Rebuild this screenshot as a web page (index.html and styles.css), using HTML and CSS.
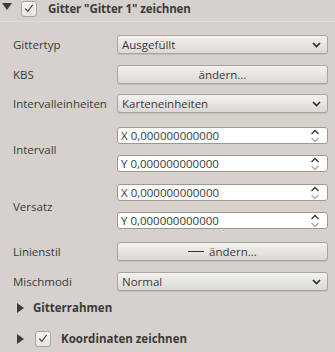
FILE: index.html
```html
<!DOCTYPE html>
<html lang="de">
<head>
<meta charset="utf-8">
<link rel="stylesheet" href="styles.css">
</head>
<body>
<div class="panel">
  <div class="header">
    <svg class="tri" width="10" height="8" viewBox="0 0 10 8"><path d="M0 0 L10 0 L5 7 Z" fill="#3c3c3c"/></svg>
    <span class="check"><svg width="15" height="15" viewBox="0 0 15 15"><path d="M3.5 7.5 L6.3 10.5 L11.5 3.5" fill="none" stroke="#4a4a4a" stroke-width="1.3"/></svg></span>
    <span class="title">Gitter "Gitter 1" zeichnen</span>
  </div>
  <div class="form">
    <div class="row r1">
      <span class="label">Gittertyp</span>
      <div class="combo"><span>Ausgefüllt</span><svg class="chev" width="9" height="6" viewBox="0 0 9 6"><path d="M1 1 L4.5 4.5 L8 1" fill="none" stroke="#2e2e2e" stroke-width="1.7"/></svg></div>
    </div>
    <div class="row r2">
      <span class="label">KBS</span>
      <div class="button">ändern...</div>
    </div>
    <div class="row r3">
      <span class="label">Intervalleinheiten</span>
      <div class="combo"><span>Karteneinheiten</span><svg class="chev" width="9" height="6" viewBox="0 0 9 6"><path d="M1 1 L4.5 4.5 L8 1" fill="none" stroke="#2e2e2e" stroke-width="1.7"/></svg></div>
    </div>
    <div class="group g1">
      <span class="label">Intervall</span>
      <div class="spins">
        <div class="spin"><span>X 0,000000000000</span><svg class="arrows" width="10" height="14" viewBox="0 0 10 14"><path d="M1.5 5 L5 1.5 L8.5 5" fill="none" stroke="#333" stroke-width="1.3"/><path d="M1.5 9 L5 12.5 L8.5 9" fill="none" stroke="#b0aca8" stroke-width="1.3"/></svg></div>
        <div class="spin"><span>Y 0,000000000000</span><svg class="arrows" width="10" height="14" viewBox="0 0 10 14"><path d="M1.5 5 L5 1.5 L8.5 5" fill="none" stroke="#333" stroke-width="1.3"/><path d="M1.5 9 L5 12.5 L8.5 9" fill="none" stroke="#b0aca8" stroke-width="1.3"/></svg></div>
      </div>
    </div>
    <div class="group g2">
      <span class="label">Versatz</span>
      <div class="spins">
        <div class="spin"><span>X 0,000000000000</span><svg class="arrows" width="10" height="14" viewBox="0 0 10 14"><path d="M1.5 5 L5 1.5 L8.5 5" fill="none" stroke="#333" stroke-width="1.3"/><path d="M1.5 9 L5 12.5 L8.5 9" fill="none" stroke="#b0aca8" stroke-width="1.3"/></svg></div>
        <div class="spin"><span>Y 0,000000000000</span><svg class="arrows" width="10" height="14" viewBox="0 0 10 14"><path d="M1.5 5 L5 1.5 L8.5 5" fill="none" stroke="#333" stroke-width="1.3"/><path d="M1.5 9 L5 12.5 L8.5 9" fill="none" stroke="#b0aca8" stroke-width="1.3"/></svg></div>
      </div>
    </div>
    <div class="row r4">
      <span class="label">Linienstil</span>
      <div class="button"><span class="dash"></span>ändern...</div>
    </div>
    <div class="row r5">
      <span class="label">Mischmodi</span>
      <div class="combo"><span>Normal</span><svg class="chev" width="9" height="6" viewBox="0 0 9 6"><path d="M1 1 L4.5 4.5 L8 1" fill="none" stroke="#2e2e2e" stroke-width="1.7"/></svg></div>
    </div>
  </div>
  <div class="sub s1">
    <svg class="tri-r" width="7" height="10" viewBox="0 0 7 10"><path d="M0 0 L7 5 L0 10 Z" fill="#3c3c3c"/></svg>
    <span class="subtitle">Gitterrahmen</span>
  </div>
  <div class="sub s2">
    <svg class="tri-r" width="7" height="10" viewBox="0 0 7 10"><path d="M0 0 L7 5 L0 10 Z" fill="#3c3c3c"/></svg>
    <span class="check small"><svg width="15" height="15" viewBox="0 0 15 15"><path d="M3.5 7.5 L6.3 10.5 L11.5 3.5" fill="none" stroke="#4a4a4a" stroke-width="1.3"/></svg></span>
    <span class="subtitle">Koordinaten zeichnen</span>
  </div>
</div>
</body>
</html>
```

FILE: styles.css
```css
html, body {
  margin: 0;
  padding: 0;
}
body {
  background: #d6d1cc;
  font-family: "Open Sans", "Noto Sans", sans-serif;
  font-size: 11.5px;
  color: #3a3a3a;
  width: 335px;
  height: 352px;
  overflow: hidden;
}
.panel {
  position: relative;
  height: 352px;
}
.header {
  display: flex;
  align-items: center;
  height: 17px;
  padding-left: 2px;
  border-bottom: 1px solid #e0dcd8;
  padding-bottom: 4px;
}
.tri {
  margin-top: -4px;
}
.check {
  display: inline-flex;
  width: 14px;
  height: 14px;
  border: 1px solid #a9a49f;
  border-radius: 3px;
  background: linear-gradient(#f7f6f5, #e6e3e0);
  margin-left: 9px;
  align-items: center;
  justify-content: center;
  overflow: hidden;
}
.title {
  font-weight: bold;
  margin-left: 11px;
  color: #3c3c3c;
  letter-spacing: -0.1px;
}
.form {
  padding-left: 13px;
  padding-top: 13px;
}
.row {
  display: flex;
  align-items: center;
  height: 19px;
}
.r2 { margin-top: 11px; }
.r3 { margin-top: 10px; }
.r4 { margin-top: 13px; }
.r5 { margin-top: 11px; }
.label {
  width: 104px;
  flex: none;
}
.combo, .button {
  box-sizing: border-box;
  width: 211px;
  height: 19px;
  border: 1px solid #aaa49e;
  border-radius: 3px;
  background: linear-gradient(#f3f2f0, #dcd8d4);
  box-shadow: 0 1px 0 #c3beb9;
  display: flex;
  align-items: center;
}
.combo {
  padding-left: 4px;
  padding-right: 6px;
  justify-content: space-between;
}
.button {
  justify-content: center;
}
.dash {
  display: inline-block;
  width: 16px;
  height: 1px;
  background: #333;
  margin-right: 5px;
}
.group {
  display: flex;
  align-items: center;
}
.g1 { margin-top: 14px; }
.g2 { margin-top: 12px; }
.spins {
  display: flex;
  flex-direction: column;
  gap: 11px;
}
.spin {
  box-sizing: border-box;
  width: 211px;
  height: 17px;
  border: 1px solid #9e9893;
  border-radius: 3px;
  background: #fff;
  display: flex;
  align-items: center;
  justify-content: space-between;
  padding-left: 3px;
  padding-right: 7px;
}
.sub {
  display: flex;
  align-items: center;
  padding-left: 17px;
}
.s1 {
  margin-top: 9px;
  height: 15px;
}
.s2 {
  margin-top: 16px;
  height: 15px;
}
.subtitle {
  font-weight: bold;
  margin-left: 9px;
}
.check.small {
  margin-left: 11px;
}
.s2 .subtitle {
  margin-left: 10px;
}
```
